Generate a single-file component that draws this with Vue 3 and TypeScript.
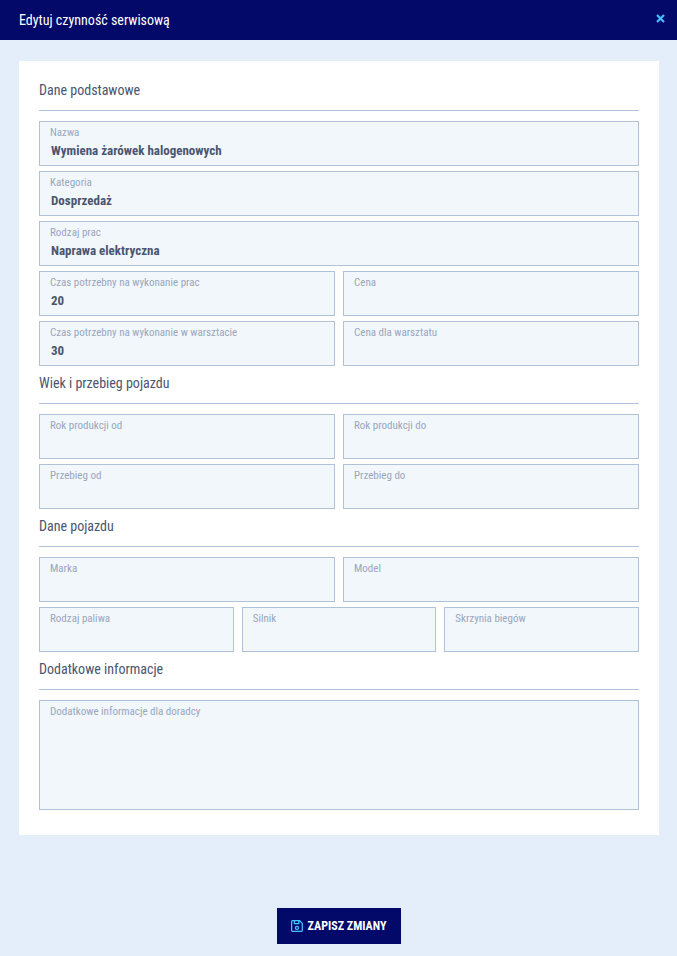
<template>
  <div class="page">
    <header class="topbar">
      <h1>Edytuj czynność serwisową</h1>
      <button class="close" type="button" aria-label="Zamknij">
        <svg width="9" height="9" viewBox="0 0 9 9">
          <path d="M1 1l7 7M8 1L1 8" stroke="#45c1ff" stroke-width="2.2" fill="none" />
        </svg>
      </button>
    </header>

    <main class="card">
      <section v-for="section in sections" :key="section.title" class="section">
        <h2>{{ section.title }}</h2>
        <div class="rows">
          <div v-for="(row, i) in section.rows" :key="i" class="row">
            <label v-for="field in row" :key="field.label" class="field" :class="{ tall: field.tall }">
              <span class="label">{{ field.label }}</span>
              <span v-if="field.value" class="value">{{ field.value }}</span>
            </label>
          </div>
        </div>
      </section>
    </main>

    <footer class="actions">
      <button class="save" type="button">
        <svg width="12" height="12" viewBox="0 0 12 12" fill="none" stroke="#45c1ff" stroke-width="1.3">
          <path d="M1.6 .7h7l2.7 2.7v6.9a1 1 0 0 1-1 1H1.6a1 1 0 0 1-1-1V1.7a1 1 0 0 1 1-1z" />
          <path d="M3.4 .7v3h4.4v-3" />
          <circle cx="6" cy="7.9" r="1.5" />
        </svg>
        ZAPISZ ZMIANY
      </button>
    </footer>
  </div>
</template>

<script setup lang="ts">
interface Field {
  label: string;
  value?: string;
  tall?: boolean;
}

interface Section {
  title: string;
  rows: Field[][];
}

const sections: Section[] = [
  {
    title: 'Dane podstawowe',
    rows: [
      [{ label: 'Nazwa', value: 'Wymiena żarówek halogenowych' }],
      [{ label: 'Kategoria', value: 'Dosprzedaż' }],
      [{ label: 'Rodzaj prac', value: 'Naprawa elektryczna' }],
      [{ label: 'Czas potrzebny na wykonanie prac', value: '20' }, { label: 'Cena' }],
      [{ label: 'Czas potrzebny na wykonanie w warsztacie', value: '30' }, { label: 'Cena dla warsztatu' }],
    ],
  },
  {
    title: 'Wiek i przebieg pojazdu',
    rows: [
      [{ label: 'Rok produkcji od' }, { label: 'Rok produkcji do' }],
      [{ label: 'Przebieg od' }, { label: 'Przebieg do' }],
    ],
  },
  {
    title: 'Dane pojazdu',
    rows: [
      [{ label: 'Marka' }, { label: 'Model' }],
      [{ label: 'Rodzaj paliwa' }, { label: 'Silnik' }, { label: 'Skrzynia biegów' }],
    ],
  },
  {
    title: 'Dodatkowe informacje',
    rows: [[{ label: 'Dodatkowe informacje dla doradcy', tall: true }]],
  },
];
</script>

<style>
html,
body {
  margin: 0;
  background: #e4eefa;
}
</style>

<style scoped>
.page {
  height: 956px;
  display: flex;
  flex-direction: column;
  background: #e4eefa;
  font-family: Roboto, "Liberation Sans", sans-serif;
  font-stretch: 75%;
  overflow: hidden;
}

.topbar {
  height: 40px;
  flex: none;
  display: flex;
  align-items: center;
  justify-content: space-between;
  padding: 0 12px 0 19px;
  background: #030969;
}

.topbar h1 {
  margin: 0;
  font-size: 14px;
  font-weight: 400;
  color: #ffffff;
}

.close {
  display: flex;
  margin-bottom: 3px;
  padding: 0;
  border: none;
  background: none;
}

.card {
  margin: 21px 18px 0 19px;
  padding: 19px 20px 25px;
  background: #ffffff;
}

.section h2 {
  margin: 0 0 10px;
  height: 30px;
  line-height: 20px;
  font-size: 14px;
  font-weight: 400;
  color: #4a5570;
  border-bottom: 1px solid #b1c1d8;
}

.section + .section {
  margin-top: 7px;
}

.rows {
  display: flex;
  flex-direction: column;
  gap: 5px;
}

.row {
  display: flex;
  gap: 8px;
}

.field {
  flex: 1 1 0;
  box-sizing: border-box;
  height: 45px;
  padding: 4px 10px 0;
  display: flex;
  flex-direction: column;
  background: #f2f7fc;
  border: 1px solid #b1c1d8;
}

.field.tall {
  height: 110px;
}

.label {
  font-size: 11px;
  line-height: 14px;
  color: #98a6bc;
}

.value {
  margin-top: 3px;
  padding-left: 1px;
  font-size: 13px;
  line-height: 16px;
  font-weight: 700;
  color: #4a5570;
}

.actions {
  flex: 1;
  display: flex;
  justify-content: center;
  align-items: flex-end;
  padding-bottom: 12px;
}

.save {
  width: 124px;
  height: 36px;
  display: flex;
  align-items: center;
  justify-content: center;
  gap: 5px;
  padding: 0;
  border: none;
  background: #030969;
  color: #ffffff;
  font-family: inherit;
  font-stretch: inherit;
  font-size: 12px;
  font-weight: 700;
}
</style>
